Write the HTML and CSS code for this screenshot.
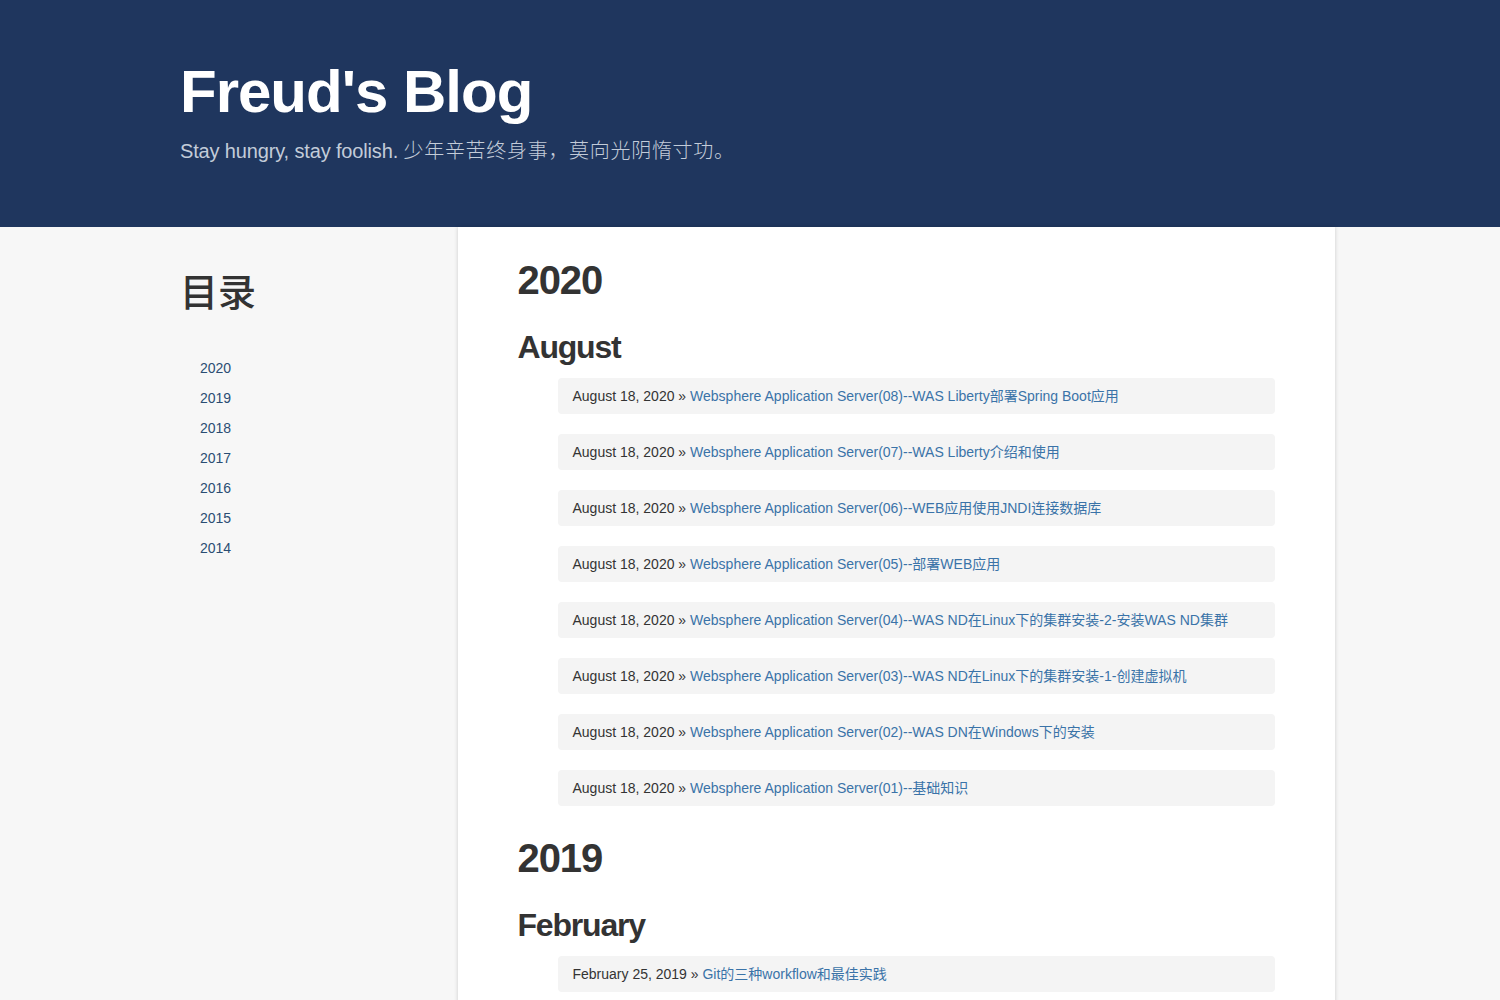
FILE: index.html
```html
<!DOCTYPE html>
<html lang="zh-CN">
<head>
<meta charset="utf-8">
<title>Freud's Blog</title>
<link rel="stylesheet" href="styles.css">
</head>
<body>
<header class="site-header">
  <div class="container">
    <h1 class="site-title">Freud's Blog</h1>
    <p class="site-desc">Stay hungry, stay foolish. <span class="cjk">少年辛苦终身事，莫向光阴惰寸功。</span></p>
  </div>
</header>
<div class="container layout">
  <aside class="sidebar">
    <h2 class="toc-title">目录</h2>
    <ul class="toc">
      <li><a href="#">2020</a></li>
      <li><a href="#">2019</a></li>
      <li><a href="#">2018</a></li>
      <li><a href="#">2017</a></li>
      <li><a href="#">2016</a></li>
      <li><a href="#">2015</a></li>
      <li><a href="#">2014</a></li>
    </ul>
  </aside>
  <main class="content">
    <h1 class="year">2020</h1>
    <h2 class="month">August</h2>
    <ul class="posts">
      <li class="post"><span class="date">August 18, 2020</span> » <a href="#">Websphere Application Server(08)--WAS Liberty部署Spring Boot应用</a></li>
      <li class="post"><span class="date">August 18, 2020</span> » <a href="#">Websphere Application Server(07)--WAS Liberty介绍和使用</a></li>
      <li class="post"><span class="date">August 18, 2020</span> » <a href="#">Websphere Application Server(06)--WEB应用使用JNDI连接数据库</a></li>
      <li class="post"><span class="date">August 18, 2020</span> » <a href="#">Websphere Application Server(05)--部署WEB应用</a></li>
      <li class="post"><span class="date">August 18, 2020</span> » <a href="#">Websphere Application Server(04)--WAS ND在Linux下的集群安装-2-安装WAS ND集群</a></li>
      <li class="post"><span class="date">August 18, 2020</span> » <a href="#">Websphere Application Server(03)--WAS ND在Linux下的集群安装-1-创建虚拟机</a></li>
      <li class="post"><span class="date">August 18, 2020</span> » <a href="#">Websphere Application Server(02)--WAS DN在Windows下的安装</a></li>
      <li class="post"><span class="date">August 18, 2020</span> » <a href="#">Websphere Application Server(01)--基础知识</a></li>
    </ul>
    <h1 class="year">2019</h1>
    <h2 class="month">February</h2>
    <ul class="posts">
      <li class="post"><span class="date">February 25, 2019</span> » <a href="#">Git的三种workflow和最佳实践</a></li>
    </ul>
  </main>
</div>
</body>
</html>
```
FILE: styles.css
```css
* { box-sizing: border-box; }
html, body {
  margin: 0;
  padding: 0;
}
body {
  background: #f7f7f7;
  color: #333;
  font-family: "Liberation Sans", "Noto Sans CJK SC", Arial, sans-serif;
  font-size: 14px;
  overflow: hidden;
}
a { color: #337ab7; text-decoration: none; }

.container {
  width: 1170px;
  margin: 0 auto;
}

.site-header {
  background: #1f365e;
  height: 227px;
  padding-top: 59px;
}
.site-header .container { padding: 0 15px; }
.site-title {
  margin: 0;
  color: #fff;
  font-size: 60px;
  font-weight: 700;
  line-height: 66px;
  letter-spacing: -1px;
}
.site-desc {
  margin: 12px 0 0;
  color: #c3ccd9;
  font-size: 20px;
  line-height: 28px;
  letter-spacing: -0.15px;
}
.site-desc .cjk {
  letter-spacing: 0.7px;
  font-weight: 300;
}

.layout {
  display: flex;
  align-items: stretch;
}
.sidebar {
  width: 292.5px;
  flex: none;
  padding: 45px 15px 0;
}
.toc-title {
  margin: 0;
  font-size: 38px;
  line-height: 42px;
  font-weight: 500;
  color: #333;
}
.toc {
  list-style: none;
  margin: 39px 0 0;
  padding: 0 0 0 20px;
}
.toc li {
  line-height: 30px;
  font-size: 14px;
}
.toc a { color: #2b4d73; }

.content {
  flex: 1;
  background: #fff;
  box-shadow: 0 0 4px rgba(0, 0, 0, 0.18);
  padding: 1px 60px 60px;
  min-height: 1000px;
}
.year {
  margin: 30px 0 0;
  font-size: 40px;
  line-height: 44px;
  font-weight: 700;
  color: #333;
  letter-spacing: -1.1px;
}
.month {
  margin: 28px 0 13px;
  font-size: 32px;
  line-height: 35px;
  font-weight: 700;
  color: #333;
  letter-spacing: -1.2px;
}
.posts {
  list-style: none;
  margin: 0;
  padding: 0 0 0 40px;
}
.post {
  background: #f4f4f4;
  border-radius: 4px;
  padding: 8px 15px;
  line-height: 20px;
  margin-bottom: 20px;
  font-size: 14px;
  color: #333;
}
.post a { color: #3a73a8; }
```
